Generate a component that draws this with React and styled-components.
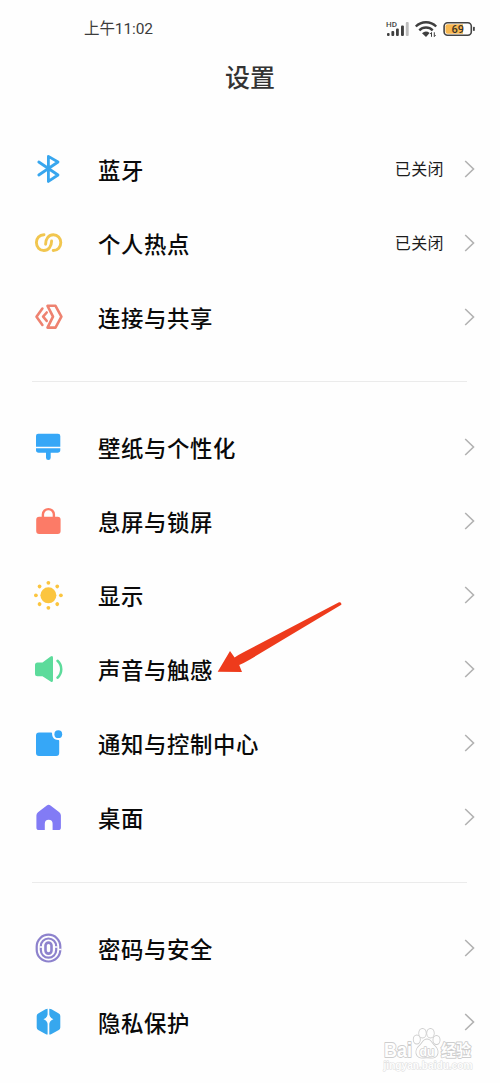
import React from 'react';
import styled, { createGlobalStyle } from 'styled-components';

const GlobalStyle = createGlobalStyle`
  * {
    box-sizing: border-box;
  }
  body {
    margin: 0;
    background: #fefefe;
    font-family: 'Noto Sans CJK SC', sans-serif;
  }
`;

const Screen = styled.div`
  position: relative;
  width: 500px;
  height: 1083px;
  overflow: hidden;
  background: #fefefe;
`;

const StatusBar = styled.div`
  display: flex;
  align-items: center;
  justify-content: space-between;
  height: 58px;
  padding: 0 24px 0 84px;
`;

const Clock = styled.span`
  color: #3c3c3c;
  font-family: Roboto, 'Noto Sans CJK SC', sans-serif;
  font-size: 15.5px;
  letter-spacing: -0.1px;
  line-height: 20px;
`;

const Header = styled.h1`
  height: 74px;
  margin: 0;
  color: #333;
  font-size: 25px;
  font-weight: 500;
  line-height: 37px;
  text-align: center;
`;

const Group = styled.ul`
  margin: 0;
  padding: 0;
  list-style: none;
`;

const Divider = styled.hr`
  width: 435px;
  height: 1px;
  margin: ${({ $before }) => $before}px 0 28px 32px;
  border: 0;
  background: #ebebeb;
`;

const Row = styled.li`
  display: flex;
  align-items: center;
  height: 74px;
  padding: 0 25px 0 32px;
`;

const RowIcon = styled.svg`
  width: 32px;
  height: 32px;
  margin-right: 34px;
  color: ${({ $color }) => $color};
`;

const Label = styled.span`
  flex: 1;
  padding-bottom: 1px;
  color: #0a0a0a;
  font-size: 22.4px;
  font-weight: 500;
  letter-spacing: 0.6px;
  line-height: 32px;
`;

const Value = styled.span`
  margin-right: 20px;
  padding-bottom: 2px;
  color: #1c1c1c;
  font-size: 16px;
  letter-spacing: 0.4px;
  line-height: 24px;
`;

const Arrow = styled.svg`
  position: absolute;
  top: 598px;
  left: 214px;
`;

const Watermark = styled.svg`
  position: absolute;
  top: 1026px;
  left: 382px;

  text,
  ellipse,
  path {
    paint-order: stroke;
  }
`;

const icons = {
  bluetooth: {
    color: '#38a6ee',
    art: (
      <path
        d="M6.8 9 26 22 16.4 28.4V3.4L26 9 6.8 22"
        fill="none"
        stroke="currentColor"
        strokeWidth="2.8"
        strokeLinecap="round"
        strokeLinejoin="round"
      />
    ),
  },
  hotspot: {
    color: '#f1c64f',
    art: (
      <g fill="none" stroke="currentColor" strokeWidth="2.9" strokeLinecap="round">
        <path d="M12 7.700C7.400 7.700 4.400 11.200 4.400 15.600S7.600 23.500 11.800 23.500C16.400 23.500 19.600 19.500 19.600 14" />
        <path d="M21.200 23.500C25.800 23.500 28.800 20 28.800 15.600S25.600 7.700 21.400 7.700C16.800 7.700 13.600 11.700 13.600 17.200" />
      </g>
    ),
  },
  share: {
    color: '#ee8270',
    art: (
      <g fill="none" stroke="currentColor" strokeWidth="2.600" strokeLinecap="round" strokeLinejoin="round">
        <path d="M15.500 4.800H23.500L29.400 15.700 23.500 26.600H15.500L21 15.700Z" />
        <path d="M10.400 7.500 4.500 15.700l5.900 8.200M14.700 11.500l-3.600 4.200 3.600 4.200" />
      </g>
    ),
  },
  brush: {
    color: '#36a7f7',
    art: (
      <path
        fill="currentColor"
        d="M6.500 2.700H26a2.300 2.300 0 0 1 2.300 2.300V15.700H4V5a2.300 2.300 0 0 1 2.500-2.300ZM4 17.300H28.300V19a2.700 2.700 0 0 1-2.700 2.700H18.700v5a2.350 2.350 0 0 1-4.700 0v-5H6.700A2.700 2.700 0 0 1 4 19Z"
      />
    ),
  },
  lock: {
    color: '#fc7b67',
    art: (
      <>
        <rect x="4.200" y="11.700" width="24.400" height="17.300" rx="3" fill="currentColor" />
        <path d="M10.900 13V9.600a5.500 5.500 0 0 1 11 0V13" fill="none" stroke="currentColor" strokeWidth="2.400" />
      </>
    ),
  },
  sun: {
    color: '#fbc53f',
    art: (
      <g fill="currentColor">
        <circle cx="16.400" cy="16.300" r="8" />
        {[0, 45, 90, 135, 180, 225, 270, 315].map((deg) => (
          <circle key={deg} cx="16.400" cy="3.800" r="1.900" transform={`rotate(${deg} 16.400 16.300)`} />
        ))}
      </g>
    ),
  },
  sound: {
    color: '#5cdb9b',
    art: (
      <>
        <path
          fill="currentColor"
          d="M5.500 9.500H10.500L18.600 3.500Q21 2 21 4.800V27.200Q21 30 18.600 28.500L10.500 23.300H5.500A2.500 2.500 0 0 1 3 20.800V12a2.500 2.500 0 0 1 2.500-2.500Z"
        />
        <path d="M25.500 7.800c5 4.500 5 12.400 0 16.900" fill="none" stroke="currentColor" strokeWidth="2.500" strokeLinecap="round" />
      </>
    ),
  },
  notice: {
    color: '#36a7f7',
    art: (
      <g fill="currentColor">
        <path d="M7 5.400H19.200c.6 0 .9.400.9 1 0 4 2.300 6.300 6 6.500.7 0 1.100.4 1.100 1V26a3 3 0 0 1-3 3H7a3 3 0 0 1-3-3V8.400a3 3 0 0 1 3-3Z" />
        <circle cx="26.300" cy="7.200" r="3.900" />
      </g>
    ),
  },
  home: {
    color: '#827bf5',
    art: (
      <path
        fill="currentColor"
        d="M14.800 4.500a3 3 0 0 1 3.700 0L27.300 11.300Q28.900 12.600 28.900 14.600V26.500a2.600 2.600 0 0 1-2.600 2.600H20.600V22.700a3.900 3.900 0 0 0-7.800 0V29.100H7a2.600 2.600 0 0 1-2.600-2.600V14.600Q4.400 12.600 6 11.300Z"
      />
    ),
  },
  fingerprint: {
    color: '#8d82cd',
    art: (
      <g fill="none" stroke="currentColor" strokeWidth="2.200">
        <rect x="4.700" y="2.700" width="23.600" height="26.800" rx="11.800" />
        <rect x="8.800" y="6.500" width="15.400" height="19.200" rx="7.700" />
        <rect x="13.500" y="10.600" width="6" height="11" rx="3" strokeWidth="2.600" />
        <path d="M7.500 15h2.600M23 15h2.600M27 17.500h2.600" stroke="#fefefe" strokeWidth="1.300" />
      </g>
    ),
  },
  privacy: {
    color: '#36a7ee',
    art: (
      <path
        fill="currentColor"
        d="M15.600 2.700V8.500Q15 12 11.500 13.200q3.500 1.200 4.100 4.600V28.600Q14.500 28.600 13.500 28L6.200 24Q4.700 23.200 4.700 21.500V10Q4.700 8.300 6.200 7.400L13.500 3.200Q14.500 2.700 15.600 2.700ZM17.300 2.700V8.500Q18 12 21.400 13.200q-3.500 1.200-4.100 4.600V28.600Q18.500 28.600 19.500 28L26.800 24Q28.300 23.200 28.300 21.500V10Q28.300 8.300 26.800 7.400L19.500 3.200Q18.500 2.700 17.300 2.700Z"
      />
    ),
  },
};

const groups = [
  [
    { icon: 'bluetooth', label: '蓝牙', value: '已关闭' },
    { icon: 'hotspot', label: '个人热点', value: '已关闭' },
    { icon: 'share', label: '连接与共享' },
  ],
  [
    { icon: 'brush', label: '壁纸与个性化' },
    { icon: 'lock', label: '息屏与锁屏' },
    { icon: 'sun', label: '显示' },
    { icon: 'sound', label: '声音与触感' },
    { icon: 'notice', label: '通知与控制中心' },
    { icon: 'home', label: '桌面' },
  ],
  [
    { icon: 'fingerprint', label: '密码与安全' },
    { icon: 'privacy', label: '隐私保护' },
  ],
];

const Chevron = () => (
  <svg width="11" height="18" viewBox="0 0 11 18" fill="none" stroke="#b2b2b2" strokeWidth="1.600">
    <path d="M1.200 1 9.500 9 1.200 17" />
  </svg>
);

const StatusIcons = () => (
  <svg width="92" height="24" viewBox="384 17 92 24">
    <text x="386" y="27" fontFamily="Roboto, sans-serif" fontSize="8" fontWeight="500" fill="#444">
      HD
    </text>
    <g fill="#3f3f3f">
      <rect x="387" y="33" width="2.600" height="3" rx="1" />
      <rect x="391.400" y="31" width="2.800" height="5" rx="1" />
      <rect x="396" y="28.500" width="2.800" height="7.500" rx="1" />
      <rect x="401" y="25.500" width="2.900" height="10.500" rx="1" />
      <rect x="405.800" y="22" width="2.900" height="14" rx="1" fill="#bdbdbd" />
    </g>
    <g fill="none" stroke="#3f3f3f" strokeWidth="2.400">
      <path d="M415.800 26.500a14.500 14.500 0 0 1 20.400 0" />
      <path d="M419.300 30.300a9.500 9.500 0 0 1 13.400 0" />
    </g>
    <path d="M426 37 422 33.200a6 6 0 0 1 7.600-.2Z" fill="#3f3f3f" />
    <path d="M431.500 36.800v-4.300l-1.300 1.500M434.300 32.300v4.300l1.300-1.500" fill="none" stroke="#3f3f3f" strokeWidth="1" />
    <rect x="444.100" y="22.700" width="27.200" height="12.600" rx="3.500" fill="#fff" stroke="#444" strokeWidth="1.600" />
    <path d="M447.500 24.200H463V33.800H447.500a2 2 0 0 1-2-2V26.200a2 2 0 0 1 2-2Z" fill="#f7b851" />
    <rect x="473" y="26.800" width="1.800" height="4.200" rx=".8" fill="#444" />
    <text x="457.700" y="33" textAnchor="middle" fontFamily="Roboto, sans-serif" fontSize="11" fontWeight="500" fill="#3d342b">
      69
    </text>
  </svg>
);

const App = () => {
  return (
    <Screen>
      <GlobalStyle />
      <StatusBar>
        <Clock>上午11:02</Clock>
        <StatusIcons />
      </StatusBar>
      <Header>设置</Header>
      {groups.map((rows, i) => (
        <React.Fragment key={rows[0].label}>
          {i > 0 && <Divider $before={i === 1 ? 27 : 28} />}
          <Group>
            {rows.map(({ icon, label, value }) => (
              <Row key={label}>
                <RowIcon viewBox="0 0 32 32" $color={icons[icon].color}>
                  {icons[icon].art}
                </RowIcon>
                <Label>{label}</Label>
                {value && <Value>{value}</Value>}
                <Chevron />
              </Row>
            ))}
          </Group>
        </React.Fragment>
      ))}
      <Arrow width="130" height="78" viewBox="214 598 130 78">
        <path
          fill="#ee3b1c"
          d="M217.700 671.800 230 651 234.600 657.600Q238 655 244 652L339 602.300Q341.800 601.800 341.300 604.800L250 659.500Q244 663 239.200 665L242 672Z"
        />
      </Arrow>
      <Watermark width="94" height="50" viewBox="382 1026 94 50" fill="#fefefe" stroke="#cdcdcd" strokeWidth="1.800" strokeLinejoin="round">
        <g fontFamily="'Liberation Sans', 'Noto Sans CJK SC', sans-serif" fontWeight="700">
          <text x="384" y="1057" fontSize="20" textLength="28" lengthAdjust="spacingAndGlyphs">
            Bai
          </text>
          <text x="441" y="1056" fontSize="16" textLength="30" lengthAdjust="spacingAndGlyphs">
            经验
          </text>
        </g>
        <ellipse cx="416.800" cy="1039.500" rx="3.100" ry="4" />
        <ellipse cx="422.500" cy="1033.200" rx="3.300" ry="4.300" />
        <ellipse cx="430.500" cy="1033.200" rx="3.300" ry="4.300" />
        <ellipse cx="436.500" cy="1040" rx="3.100" ry="4" />
        <path d="M427 1039.500c3.500 0 4.500 3.500 7 6 2.500 2.300 4.300 4.200 3.500 8-.8 3.500-4 4.500-6.500 4.100-2.700-.4-5.300-.4-8 0-2.500.4-5.700-.6-6.500-4.100-.8-3.800 1-5.700 3.500-8 2.500-2.500 3.500-6 7-6Z" />
        <g fontFamily="'Liberation Sans', sans-serif" fontWeight="700">
          <text x="419.500" y="1055.500" fontSize="12.500" strokeWidth="1.400" textLength="15" lengthAdjust="spacingAndGlyphs">
            du
          </text>
          <text x="383.500" y="1069" fontSize="10" strokeWidth="1" stroke="#dcdcdc" textLength="89" lengthAdjust="spacingAndGlyphs">
            jingyan.baidu.com
          </text>
        </g>
      </Watermark>
    </Screen>
  );
};

export default App;
